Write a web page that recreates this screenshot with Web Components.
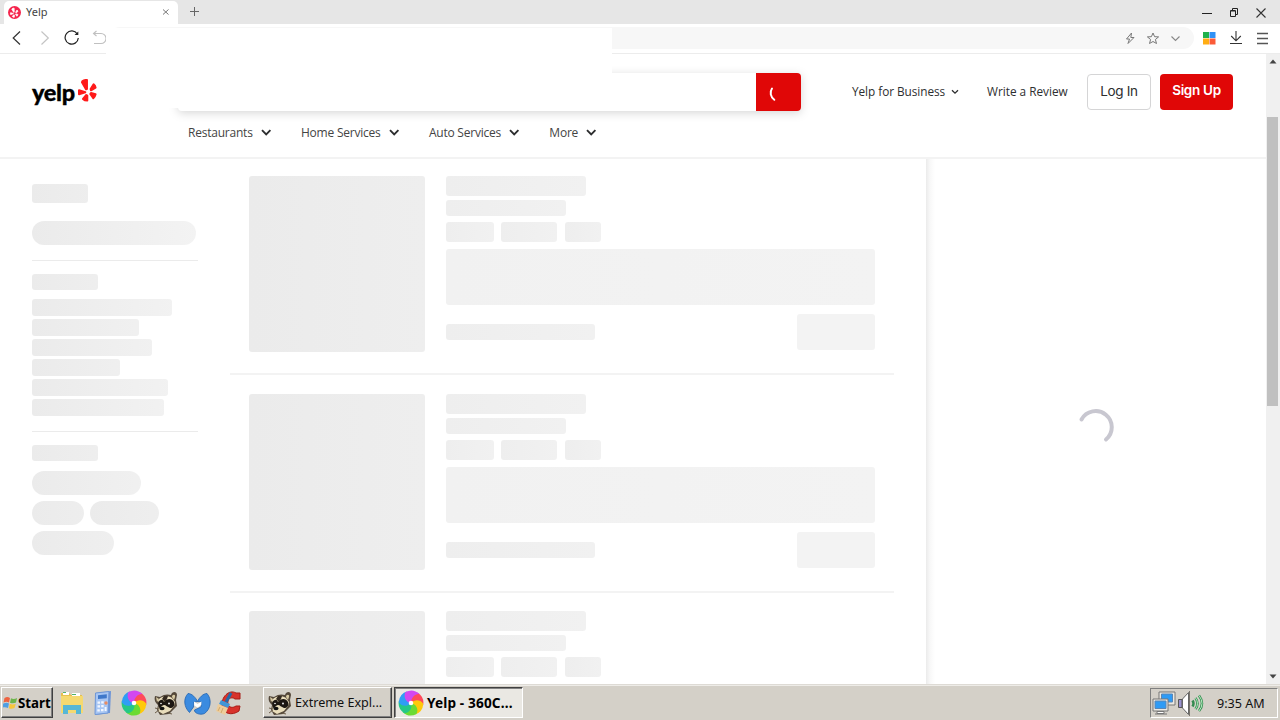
<!DOCTYPE html>
<html lang="en">
<head>
<meta charset="utf-8">
<title>Yelp</title>
<style>
  body {
    margin: 0;
    width: 1280px;
    height: 720px;
    overflow: hidden;
    display: flex;
    flex-direction: column;
    background: #fff;
    font-family: "Open Sans", "Noto Sans", sans-serif;
  }
  main {
    display: flex;
    height: 630px;
    overflow: hidden;
  }
  .page {
    width: 1266px;
    display: flex;
    flex-direction: column;
  }
  .content {
    flex: 1;
    min-height: 0;
    display: flex;
    overflow: hidden;
  }
  /* blank panel floating over the address bar and search field */
  .panel {
    position: absolute;
    left: 106px;
    top: 28px;
    width: 506px;
    height: 80px;
    background: #fff;
  }
</style>
</head>
<body>
  <browser-chrome></browser-chrome>
  <main>
    <div class="page">
      <site-header></site-header>
      <div class="content">
        <filter-sidebar></filter-sidebar>
        <result-list></result-list>
        <map-pane></map-pane>
      </div>
    </div>
    <scroll-bar></scroll-bar>
  </main>
  <task-bar></task-bar>
  <div class="panel"></div>

<script>
// attaches an open shadow root filled with the given markup
function render(el, html) {
  el.attachShadow({ mode: 'open' });
  el.shadowRoot.innerHTML = html;
}

// five petal burst, drawn in a 56 x 70 box
const burst = (fill) => `
  <g fill="${fill}" stroke="${fill}" stroke-width="6" stroke-linejoin="round">
    <path d="M13 7Q19 2 27 3V30L24 31L12 10Z"/>
    <path d="M38 30L47 16Q52 20 53 26L39 34Z"/>
    <path d="M39 42L53 46Q51 54 46 58L37 45Z"/>
    <path d="M28 50V65Q20 65 15 60L25 48Z"/>
    <path d="M3 34L22 40L3 46Q1 40 3 34Z"/>
  </g>`;

class SkeletonBar extends HTMLElement {
  connectedCallback() {
    const w = this.getAttribute('w');
    const h = this.getAttribute('h');
    const r = this.getAttribute('r') || 3;
    render(this, `
      <style>
        :host {
          display: block;
          flex: none;
          width: ${w}px;
          height: ${h}px;
          border-radius: ${r}px;
          background: linear-gradient(90deg, var(--from, #ebebeb), var(--to, #f3f3f3)) 0 0 / var(--span, 100%) 100%;
        }
      </style>
    `);
  }
}

class SpinnerArc extends HTMLElement {
  constructor() {
    super();
    render(this, `
      <style>
        :host { display: block; width: 40px; height: 40px; }
        svg { display: block; }
      </style>
      <svg width="40" height="40" fill="none" stroke="#c8c7d0" stroke-width="4" stroke-linecap="round">
        <path d="M5.500 12.500A16.100 16.100 0 1 1 30 32.500"/>
      </svg>
    `);
  }
}

class BrowserChrome extends HTMLElement {
  constructor() {
    super();
    render(this, `
      <style>
        :host { display: block; height: 54px; flex: none; }
        svg { display: block; flex: none; }
        .tabs { display: flex; height: 24px; background: #e6e6e6; }
        .tab {
          display: flex;
          align-items: center;
          box-sizing: border-box;
          width: 174px;
          height: 23px;
          margin: 1px 0 0 4px;
          padding: 0 8px 1px 4px;
          background: #fff;
          border-radius: 5px 5px 0 0;
          font: 11px "Noto Sans", sans-serif;
          color: #444;
        }
        .tab span { flex: 1; margin: -1px 0 0 5px; }
        .plus { margin: 6px 0 0 11px; }
        .win { display: flex; margin: 6px 13px 0 auto; gap: 15px; }
        .toolbar {
          display: flex;
          align-items: center;
          box-sizing: border-box;
          height: 30px;
          border-bottom: 1px solid #ececec;
        }
        .nav { display: flex; margin: -1px 0 0 8px; }
        .address {
          display: flex;
          align-items: center;
          justify-content: flex-end;
          gap: 7px;
          box-sizing: border-box;
          width: 1085px;
          height: 22px;
          margin: -1px 0 0 3px;
          padding-right: 10px;
          background: #f7f7f7;
          border-radius: 11px;
        }
        .tools { display: flex; margin: -1px 0 0 7px; gap: 10px; }
      </style>
      <div class="tabs">
        <div class="tab">
          <svg width="13" height="13" viewBox="0 0 13 13">
            <circle cx="6.500" cy="6.500" r="6.500" fill="#f5254d"/>
            <g transform="translate(2.200 1.800) scale(.145)">${burst('#fff')}</g>
          </svg>
          <span>Yelp</span>
          <svg width="9" height="9" stroke="#777" stroke-width="1"><path d="M2 1.500l5.500 5M7.500 1.500L2 6.500"/></svg>
        </div>
        <svg class="plus" width="11" height="11" stroke="#666" stroke-width="1"><path d="M1 5.500h9M5.500 1v9"/></svg>
        <div class="win">
          <svg width="12" height="14" stroke="#222" stroke-width="1"><path d="M1 7.500h10"/></svg>
          <svg width="12" height="14" fill="none" stroke="#222"><path d="M2.500 4.500h5v6h-5zM4.500 4V2.500h5v6H8M3 5h4"/></svg>
          <svg width="12" height="14" stroke="#333" stroke-width="1.100"><path d="M1.500 2.500l9 9M10.500 2.500l-9 9"/></svg>
        </div>
      </div>
      <div class="toolbar">
        <div class="nav">
          <svg width="28" height="28" fill="none" stroke="#333" stroke-width="1.200"><path d="M12 7.500L5.200 14l6.800 6.500"/></svg>
          <svg width="28" height="28" fill="none" stroke="#c4c4c4" stroke-width="1.200"><path d="M5.500 7.500l6.800 6.500-6.800 6.500"/></svg>
          <svg width="28" height="28" fill="none" stroke="#222" stroke-width="1.200"><path d="M13.300 10A6.600 6.600 0 1 0 14.300 14"/><path d="M10.500 11h3.800V7.500z" fill="#222" stroke="none"/></svg>
          <svg width="14" height="28" fill="none" stroke="#c0c0c0" stroke-width="1.100"><path d="M4.500 7L1.500 9.500l3 2.500M1.500 9.500h7.500a5 5 0 0 1 0 10H2"/></svg>
        </div>
        <div class="address">
          <svg width="16" height="16" fill="none" stroke="#777"><path d="M9.500 3L4.500 9h3L6 13.500 12 7.500H8.800z"/></svg>
          <svg width="16" height="16" fill="none" stroke="#777"><path d="M8 3l1.600 3.700 4 .2-3.200 2.600 1.100 4L8 11.500l-3.500 2 1.100-4-3.200-2.600 4-.2z"/></svg>
          <svg width="16" height="16" fill="none" stroke="#888" stroke-width="1.100"><path d="M3.500 6.500l4 4 4-4"/></svg>
        </div>
        <div class="tools">
          <svg width="16" height="16"><path fill="#20b14c" d="M2 2h6v6H2z"/><path fill="#2f91f5" d="M8.500 2h6v6h-6z"/><path fill="#ffad13" d="M2 8.500h6v6H2z"/><path fill="#fb5b38" d="M8.500 8.500h6v6h-6z"/></svg>
          <svg width="18" height="16" fill="none" stroke="#333" stroke-width="1.100"><path d="M9 1v9.500M4.200 6L9 10.800 13.800 6M3 13.500h12"/></svg>
          <svg width="16" height="16" stroke="#555" stroke-width="1.300"><path d="M2 3.500h11M2 8.500h11M2 13.500h11"/></svg>
        </div>
      </div>
    `);
  }
}

class NavItem extends HTMLElement {
  constructor() {
    super();
    render(this, `
      <style>
        :host { display: flex; align-items: center; gap: 7px; white-space: nowrap; }
        svg { display: block; }
      </style>
      <slot></slot>
      <svg width="12" height="10" fill="none" stroke="#2d2e2f" stroke-width="1.900"><path d="M2 2.200l4.200 4.200 4.200-4.200"/></svg>
    `);
  }
}

class SiteHeader extends HTMLElement {
  constructor() {
    super();
    render(this, `
      <style>
        :host {
          display: flex;
          flex: none;
          flex-direction: column;
          box-sizing: border-box;
          height: 105px;
          border-bottom: 2px solid #f3f3f3;
          color: #2d2e2f;
        }
        svg { display: block; }
        .top { display: flex; height: 58px; padding-left: 32px; box-sizing: border-box; }
        .logo {
          display: flex;
          width: 146px;
          padding-top: 24px;
        }
        .logo span {
          display: block;
          width: 46px;
          margin-top: -2px;
          font: 900 23.500px/32px Lato, sans-serif;
          letter-spacing: -.3px;
          color: #000;
          -webkit-text-stroke: .3px #000;
        }
        .logo svg { margin-top: 1px; }
        .search-box {
          height: 57px;
          filter: drop-shadow(0 2px 5px rgba(0, 0, 0, .16));
        }
        .search {
          display: flex;
          justify-content: flex-end;
          width: 623px;
          height: 38px;
          margin-top: 19px;
          border-radius: 4px;
          overflow: hidden;
          background: #fff;
        }
        .go { width: 45px; background: #e00707; }
        .account {
          display: flex;
          align-items: center;
          height: 36px;
          margin: 20px 0 0 51px;
          font-size: 11.800px;
          font-weight: 500;
        }
        .biz { width: 94px; margin-top: -2px; white-space: nowrap; letter-spacing: -.050px; }
        .write { margin: -2px 0 0 27px; width: 100px; white-space: nowrap; }
        .btn {
          box-sizing: border-box;
          height: 36px;
          border-radius: 4px;
          font: 13.500px/33px Inter, sans-serif;
          text-align: center;
          white-space: nowrap;
        }
        .login { width: 64px; border: 1px solid #d5d5d6; letter-spacing: -.3px; }
        .signup { width: 73px; margin-left: 9px; background: #e00707; color: #fff; font-weight: 600; letter-spacing: -.3px; }
        .links {
          display: flex;
          gap: 29.300px;
          padding: 12px 0 0 188px;
          font-size: 12px;
          line-height: 17px;
          letter-spacing: -.22px;
          color: #444;
        }
      </style>
      <div class="top">
        <div class="logo">
          <span>yelp</span>
          <svg width="18.600" height="23.300" viewBox="0 0 56 70">${burst('#ff1a1a')}</svg>
        </div>
        <div class="search-box">
          <div class="search">
            <div class="go">
              <svg width="45" height="38" fill="none" stroke="#fff" stroke-width="2" stroke-linecap="round"><path d="M16 15.500c-2.500 3.500-1.500 8.500 2.300 11.300"/></svg>
            </div>
          </div>
        </div>
        <div class="account">
          <span class="biz">Yelp for Business</span>
          <svg width="10" height="8" style="margin: -1px 0 0 4px" fill="none" stroke="#2d2e2f" stroke-width="1.300"><path d="M2 2.200l3 3 3-3"/></svg>
          <span class="write">Write a Review</span>
          <div class="btn login">Log In</div>
          <div class="btn signup">Sign Up</div>
        </div>
      </div>
      <div class="links">
        <nav-item>Restaurants</nav-item>
        <nav-item>Home Services</nav-item>
        <nav-item>Auto Services</nav-item>
        <nav-item>More</nav-item>
      </div>
    `);
  }
}

class FilterSidebar extends HTMLElement {
  constructor() {
    super();
    const lines = [140, 107, 120, 88, 136, 132];
    render(this, `
      <style>
        :host {
          display: flex;
          flex: none;
          flex-direction: column;
          width: 166px;
          padding: 25px 32px 0;
          --span: 166px;
        }
        hr { width: 100%; height: 1px; margin: 0; border: 0; background: #ebebeb; }
        .lines { display: flex; flex-direction: column; gap: 3px; margin: 9px 0 15px; }
        .pills { display: flex; flex-wrap: wrap; gap: 6px; margin-top: 10px; }
        .pills skeleton-bar:first-child { margin-right: 40px; }
      </style>
      <skeleton-bar w="56" h="19"></skeleton-bar>
      <skeleton-bar w="164" h="24" r="12" style="margin: 18px 0 15px"></skeleton-bar>
      <hr>
      <skeleton-bar w="66" h="16" style="margin-top: 13px"></skeleton-bar>
      <div class="lines">
        ${lines.map(w => `<skeleton-bar w="${w}" h="17"></skeleton-bar>`).join('')}
      </div>
      <hr>
      <skeleton-bar w="66" h="16" style="margin-top: 13px"></skeleton-bar>
      <div class="pills">
        <skeleton-bar w="109" h="24" r="12"></skeleton-bar>
        <skeleton-bar w="52" h="24" r="12"></skeleton-bar>
        <skeleton-bar w="69" h="24" r="12"></skeleton-bar>
        <skeleton-bar w="82" h="24" r="12"></skeleton-bar>
      </div>
    `);
  }
}

class ResultCard extends HTMLElement {
  constructor() {
    super();
    render(this, `
      <style>
        :host {
          display: flex;
          flex: none;
          gap: 20.700px;
          box-sizing: border-box;
          height: 217.500px;
          padding: 18.500px 19px 0 19.400px;
          border-top: 2px solid #f3f3f3;
        }
        .photo { --from: #ebebeb; --to: #eee; }
        .info { display: flex; flex-direction: column; width: 429px; --from: #eee; --to: #f1f1f1; }
        .tags { display: flex; gap: 7.300px; margin: 6px 0 7px; }
        .foot { display: flex; justify-content: space-between; align-items: center; margin-top: 9px; }
        .wide { --from: #f1f1f1; --to: #f3f3f3; }
      </style>
      <skeleton-bar class="photo" w="176" h="176"></skeleton-bar>
      <div class="info">
        <skeleton-bar w="140" h="20"></skeleton-bar>
        <skeleton-bar w="120" h="16" style="margin-top: 4px"></skeleton-bar>
        <div class="tags">
          <skeleton-bar w="48" h="20"></skeleton-bar>
          <skeleton-bar w="56" h="20"></skeleton-bar>
          <skeleton-bar w="36" h="20"></skeleton-bar>
        </div>
        <skeleton-bar class="wide" w="429" h="56"></skeleton-bar>
        <div class="foot">
          <skeleton-bar w="149" h="16"></skeleton-bar>
          <skeleton-bar w="78" h="36" style="--from: #f3f3f3; --to: #f3f3f3"></skeleton-bar>
        </div>
      </div>
    `);
  }
}

class ResultList extends HTMLElement {
  constructor() {
    super();
    render(this, `
      <style>
        :host { display: block; width: 664px; margin-top: -3.500px; flex: none; }
      </style>
      <result-card></result-card>
      <result-card></result-card>
      <result-card></result-card>
    `);
  }
}

class MapPane extends HTMLElement {
  constructor() {
    super();
    render(this, `
      <style>
        :host {
          display: flex;
          flex: 1;
          justify-content: center;
          margin-left: 32px;
          background: linear-gradient(90deg, #ebebeb, #f8f8f8 4px, #fff 9px);
        }
        spinner-arc { margin-top: 248px; }
      </style>
      <spinner-arc></spinner-arc>
    `);
  }
}

class ScrollBar extends HTMLElement {
  constructor() {
    super();
    render(this, `
      <style>
        :host { display: flex; flex-direction: column; align-items: center; width: 14px; background: #f0f0f0; }
        .thumb { width: 11px; height: 289px; margin: 48px 1px auto 0; background: #c0c0c0; }
      </style>
      <svg width="14" height="15"><path d="M3.500 9.500h7L7 5.500z" fill="#444"/></svg>
      <div class="thumb"></div>
      <svg width="14" height="15"><path d="M3.500 5.500h7L7 9.500z" fill="#444"/></svg>
    `);
  }
}

const wheelColors = ['#ff4a5a', '#ffc90a', '#6bdb34', '#25c787', '#2f9df5', '#d247ef'];

const icons = {
  folder: `<svg width="26" height="26"><path d="M2 3h8l2 2h11v18H2z" fill="#e6c14f"/><path d="M4 2h6v3H4zM13 3h8v3h-8z" fill="#fff"/><path d="M4 2h3v1H4zM13 4h4v1h-4z" fill="#52b36a"/><path d="M2 6h22v17H2z" fill="#f5d970"/><path d="M4 15h18v9h-5v-4H9v4H4z" fill="#57b7d6"/></svg>`,
  calc: `<svg width="26" height="26"><path d="M6 3l15-2-1 22-15 2z" fill="#6d95d8"/><path d="M5.500 3l13.500-1.500-1 21.500-13 1.500z" fill="#a8c6f3" stroke="#6f97d6"/><path d="M8 5.200l8.800-.9v4L8 9z" fill="#3f78ca"/><g fill="#f1f6ff"><path d="M7.500 11.500H10v2.200H7.500zM11.200 11.300h2.500v2.200h-2.500zM7.500 15.300H10v2.200H7.500zM11.200 15.100h2.500v2.200h-2.500zM7.300 19.200h2.500v2.200H7.300zM11 19h2.500v2.200H11zM14.600 17h2v4h-2z"/></g><circle cx="16" cy="13" r="1.700" fill="#e98c62"/></svg>`,
  // one curved blade per colour, turned round the hub
  wheel: `<svg width="26" height="26" viewBox="-13 -13 26 26">${wheelColors.map((c, i) => `<path d="M0 0C-5-1-8-6-5.500-11A12.300 12.300 0 0 1 8.500-8.900C4-9.500 0-5 0 0Z" fill="${c}" transform="rotate(${60 + i * 60})"/>`).join('')}<circle r="2.300" fill="#fff"/></svg>`,
  raccoon: `<svg width="26" height="26"><path d="M2 6l5 1C11 4 15 4 18 5c1-4 6-4 6 0l-1 5 1 6-4 4-4 4-9 1-3-5 1-5C2 12 1 10 2 6z" fill="#54483a"/><path d="M5 10c3-4 10-5 14-2l3 4-1 4-4 5-7 3-5-3 1-6z" fill="#e9ddbb"/><path d="M19 7c0-3 4-3 3 0l-1 3zM3 7l3 2-2 3z" fill="#d8caa3"/><path d="M5 13c2-4 5-4 6-1 3-4 8-4 10 0 1 4-1 6-4 6-3-1-4-3-6-3s-3 3-5 3z" fill="#1d1712"/><path d="M9 9l3 3 2-3 1-3-4 0z" fill="#33291f"/><ellipse cx="9" cy="18.500" rx="2.600" ry="1.700" fill="#111"/><circle cx="8" cy="13.500" r=".8" fill="#fff"/><circle cx="16" cy="13.500" r=".9" fill="#fff"/><path d="M2 23l4-3M15 23l4 1M2 18l4 1" stroke="#6b5d49"/></svg>`,
  malware: `<svg width="27" height="26"><g fill="#3b8be0" stroke="#2263b0" stroke-width=".8"><path d="M4 3.500C8 3.500 12 8 13.500 11.500L10 12l-.5 5-4 5.500C0 17-1 9 4 3.500z"/><path d="M23 3.500C19 3.500 15 8 13.500 11.500l4 .5-.5 5-6.500 3C10 23 16 25.500 20.500 23.500 27 19 28 9 23 3.500z"/></g><path d="M10 11.500l3.500 2.500 4-2.500-.3 3.500-3.500 2.500-3.500-2z" fill="#fff"/></svg>`,
  cleaner: `<svg width="26" height="26"><path d="M25 3v6h-5c-4-3-8 0-7 5 1 4 5 4 8 2h4l-1 5C17 26 8 24 7 16 6 7 14-1 21 3z" fill="#d8322b" stroke="#a81c16"/><path d="M16 3l-5 9" stroke="#246aa9" stroke-width="3"/><path d="M6 10l9 4-2 4-9-4z" fill="#4296d6"/><path d="M3 14l10 4-3 7-9-4z" fill="#edcd9b"/><path d="M5 17l-2 4M8 18l-2 5" stroke="#d0a76b"/></svg>`,
  flag: `<svg width="15" height="15"><path d="M1.500 3C4 1.500 5 2 7 3L6 7.500C4 6.500 3 6.500.500 7.500z" fill="#ee6340"/><path d="M8 3.300C10 4.500 12 4 14 3l-1 4.500c-2 1-4 1-6 .2z" fill="#6db54b"/><path d="M.300 8.500C3 7.500 4 7.500 6 8.500L5 13C3 12-0 12-1 13z" fill="#4f9ee3"/><path d="M6.800 8.800c2 1 4 1 6 0L11.500 13c-2 1-4 1-5.700.2z" fill="#f8c63d"/></svg>`,
  network: `<svg width="26" height="26"><path d="M8 2h16v13H8z" fill="#ece9e2" stroke="#777"/><path d="M10.500 4h11v8h-11z" fill="#2e9bf5" stroke="#5a86b5"/><path d="M2 9h15v12H2z" fill="#ece9e2" stroke="#777"/><path d="M4 11h11v7.500H4z" fill="#2e9bf5" stroke="#5a86b5"/><path d="M6 21.500h7v2H6zM4 24h12" fill="#fff" stroke="#777"/></svg>`,
  sound: `<svg width="28" height="26"><path d="M1.500 9.500H5v8H1.500z" fill="#9991cf" stroke="#555"/><path d="M5.500 9l6-6.500v22L5.500 18z" fill="#fff" stroke="#666"/><path d="M12.500 1v25" stroke="#77736c"/><path d="M15.500 10.500q2 3 0 6M18.500 8q4 5.500 0 11M22 5.500q6 8 0 15.500" fill="none" stroke="#348b50" stroke-width="2.500"/><path d="M18.500 8q4 5.500 0 11M22 5.500q6 8 0 15.500" fill="none" stroke="#b5efc1"/></svg>`,
};

class TaskButton extends HTMLElement {
  constructor() {
    super();
    render(this, `
      <style>
        :host {
          display: flex;
          align-items: center;
          box-sizing: border-box;
          width: 129px;
          height: 31px;
          padding-left: 3px;
          gap: 2px;
          border: 1px solid;
          border-color: #fff #404040 #404040 #fff;
          box-shadow: inset -1px -1px #808080;
          white-space: nowrap;
        }
        :host([active]) {
          border-color: #404040 #fff #fff #404040;
          box-shadow: inset 1px 1px #808080;
          background: #eae8e3;
          font-weight: bold;
        }
      </style>
      <slot name="icon"></slot><slot></slot>
    `);
  }
}

class TaskBar extends HTMLElement {
  constructor() {
    super();
    render(this, `
      <style>
        :host {
          display: flex;
          flex: none;
          box-sizing: border-box;
          height: 36px;
          padding: 2px 1px 0;
          border-top: 1px solid #dedbd5;
          background: #d4d0c8;
          box-shadow: inset 0 1px #eeece8;
          font: 12.600px "Noto Sans", sans-serif;
          color: #111;
        }
        svg { display: block; flex: none; }
        .start { width: 52px; padding-left: 1px; gap: 0; font-size: 13.300px; font-weight: bold; color: #000; }
        .quick { display: flex; gap: 5.200px; width: 199px; margin: 3px 0 0 6px; }
        .quick svg:last-child { margin-left: -1px; }
        .current { gap: 3px; font-size: 13.600px; color: #000; letter-spacing: .15px; }
        .tray {
          display: flex;
          align-items: center;
          box-sizing: border-box;
          width: 128px;
          height: 30px;
          margin: 1px 1px 0 auto;
          border: 1px solid;
          border-color: #808080 #fff #fff #808080;
        }
        .clock { margin-left: 12px; white-space: nowrap; }
      </style>
      <task-button class="start"><span slot="icon">${icons.flag}</span><span>Start</span></task-button>
      <div class="quick">${icons.folder}${icons.calc}${icons.wheel}${icons.raccoon}${icons.malware}${icons.cleaner}</div>
      <task-button style="margin-left: 5px"><span slot="icon">${icons.raccoon}</span><span>Extreme Expl...</span></task-button>
      <task-button class="current" style="margin-left: 2px" active><span slot="icon">${icons.wheel}</span><span>Yelp - 360C...</span></task-button>
      <div class="tray">${icons.network}${icons.sound}<span class="clock">9:35 AM</span></div>
    `);
  }
}

window.customElements.define('skeleton-bar', SkeletonBar);
window.customElements.define('spinner-arc', SpinnerArc);
window.customElements.define('browser-chrome', BrowserChrome);
window.customElements.define('nav-item', NavItem);
window.customElements.define('site-header', SiteHeader);
window.customElements.define('filter-sidebar', FilterSidebar);
window.customElements.define('result-card', ResultCard);
window.customElements.define('result-list', ResultList);
window.customElements.define('map-pane', MapPane);
window.customElements.define('scroll-bar', ScrollBar);
window.customElements.define('task-button', TaskButton);
window.customElements.define('task-bar', TaskBar);
</script>
</body>
</html>
